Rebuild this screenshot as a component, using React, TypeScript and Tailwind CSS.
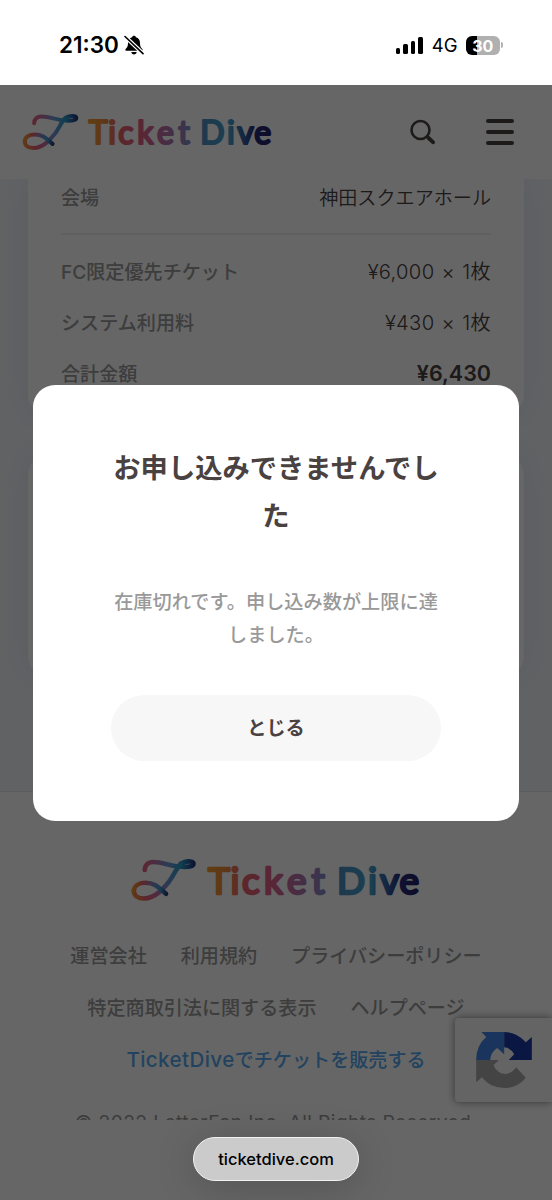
import React from 'react';

interface Row {
  label: string;
  value: string;
  strong?: boolean;
}

const priceRows: Row[] = [
  { label: 'FC限定優先チケット', value: '¥6,000 × 1枚' },
  { label: 'システム利用料', value: '¥430 × 1枚' },
  { label: '合計金額', value: '¥6,430', strong: true },
];

const footerLinks: string[][] = [
  ['運営会社', '利用規約', 'プライバシーポリシー'],
  ['特定商取引法に関する表示', 'ヘルプページ'],
];

const Logo: React.FC<{ id: string; className: string }> = ({ id, className }) => (
  <svg className={className} viewBox="0 0 290 44" fill="none" role="img" aria-label="Ticket Dive">
    <defs>
      <linearGradient id={`${id}-word`} gradientUnits="userSpaceOnUse" x1="76" y1="0" x2="288" y2="0">
        <stop offset="0" stopColor="#f29a2e" />
        <stop offset="0.09" stopColor="#ee8a3c" />
        <stop offset="0.17" stopColor="#e8606a" />
        <stop offset="0.32" stopColor="#dd6090" />
        <stop offset="0.42" stopColor="#b86fa8" />
        <stop offset="0.54" stopColor="#8c86c4" />
        <stop offset="0.63" stopColor="#4a8fc0" />
        <stop offset="0.77" stopColor="#46a0cc" />
        <stop offset="0.84" stopColor="#3468a8" />
        <stop offset="0.91" stopColor="#262c7c" />
        <stop offset="1" stopColor="#241f66" />
      </linearGradient>
      <linearGradient id={`${id}-top`} gradientUnits="userSpaceOnUse" x1="12" y1="0" x2="66" y2="0">
        <stop offset="0" stopColor="#e8607c" />
        <stop offset="0.2" stopColor="#c46ea0" />
        <stop offset="0.45" stopColor="#6f96d4" />
        <stop offset="0.7" stopColor="#2b9cc8" />
        <stop offset="0.85" stopColor="#245a9c" />
        <stop offset="1" stopColor="#1f2468" />
      </linearGradient>
      <linearGradient id={`${id}-stem`} gradientUnits="userSpaceOnUse" x1="2" y1="40" x2="52" y2="4">
        <stop offset="0" stopColor="#f29a2e" />
        <stop offset="0.16" stopColor="#e8606a" />
        <stop offset="0.36" stopColor="#c66aa8" />
        <stop offset="0.58" stopColor="#7290d2" />
        <stop offset="0.85" stopColor="#3a9ccc" />
        <stop offset="1" stopColor="#2580b4" />
      </linearGradient>
      <linearGradient id={`${id}-tail`} gradientUnits="userSpaceOnUse" x1="2" y1="30" x2="37" y2="36">
        <stop offset="0" stopColor="#f29a2e" />
        <stop offset="0.25" stopColor="#e8606a" />
        <stop offset="0.5" stopColor="#9080c0" />
        <stop offset="0.75" stopColor="#3a9ccc" />
        <stop offset="1" stopColor="#222a70" />
      </linearGradient>
    </defs>
    <g strokeWidth="4.6" strokeLinecap="round" strokeLinejoin="round">
      <path stroke={`url(#${id}-stem)`} d="M2.8 33C3 38 7 40.5 13 40.5C24 40.5 32 31 38 23.7C43 17 46 9 50 5.5" />
      <path stroke={`url(#${id}-tail)`} d="M2.8 33C3 27.5 8.5 24.8 14.5 24.8C25 24.8 29 31 35 35.8" />
      <path stroke={`url(#${id}-top)`} d="M13.8 12C13.8 7 17 4 22.5 4C32 4 39 8.2 50 8.7C57 9.2 62.5 8.5 62.5 5.8C62.5 3 57 2.8 53 4.2C49.5 5.6 47.5 8 45.5 11" />
    </g>
    <text
      x="77 99.5 111 133 156 180.5 193 206 237 249 268.5"
      y="36"
      fontSize="37"
      fontWeight="400"
      fill={`url(#${id}-word)`}
      stroke={`url(#${id}-word)`}
      strokeWidth="2.6"
      strokeLinejoin="round"
      className="font-['Lato',sans-serif]"
    >
      Ticket Dive
    </text>
  </svg>
);

const StatusBar: React.FC = () => (
  <div className="flex h-[85px] shrink-0 items-center justify-between bg-white pl-[59px] pr-[49px] pt-[5px] font-['Inter',sans-serif] text-black">
    <div className="flex items-center gap-[5px]">
      <span className="text-[22.5px] font-semibold leading-none">21:30</span>
      <svg className="h-5 w-5" viewBox="0 0 20 20">
        <path fill="currentColor" d="M10 0.8c-.9 0-1.7.6-1.9 1.4C5.2 3 4 5.3 4 8c0 4-1.5 5-2.5 6.3-.4.6-.1 1.4.7 1.4h15.6c.8 0 1.1-.8.7-1.4C17.5 13 16 12 16 8c0-2.7-1.2-5-4.1-5.8C11.7 1.4 10.9.8 10 .8zM7.3 17h5.4c-.2 1.5-1.3 2.5-2.7 2.5S7.5 18.5 7.3 17z" />
        <path stroke="white" strokeWidth="4" d="M0.5 1L19.5 19" />
        <path stroke="currentColor" strokeWidth="1.6" strokeLinecap="round" d="M1 1.5L19 18.7" />
      </svg>
    </div>
    <div className="flex items-center">
      <div className="flex items-end gap-[3px]">
        <span className="h-1.5 w-[4.5px] rounded-[1.5px] bg-black" />
        <span className="h-[9.5px] w-[4.5px] rounded-[1.5px] bg-black" />
        <span className="h-[13px] w-[4.5px] rounded-[1.5px] bg-black" />
        <span className="h-[17px] w-[4.5px] rounded-[1.5px] bg-black" />
      </div>
      <span className="ml-[9px] text-[18.5px] leading-none">4G</span>
      <div className="ml-2 flex h-[19px] w-[34.5px] items-center justify-center rounded-[6px] bg-[linear-gradient(90deg,#000_32%,#b0b0b0_32%)] pt-px text-[16px] font-bold leading-none text-white">
        30
      </div>
      <span className="ml-px h-[6px] w-[2px] rounded-r-full bg-[#b0b0b0]" />
    </div>
  </div>
);

const SiteHeader: React.FC = () => (
  <header className="flex h-[94px] shrink-0 items-center bg-white pl-[22px] pr-[38px] text-[#4a4141]">
    <Logo id="head" className="h-[38px] w-[251px]" />
    <svg className="ml-auto h-[26px] w-[26px]" viewBox="0 0 26 26" fill="none" stroke="currentColor" strokeLinecap="round">
      <circle cx="10.5" cy="11" r="9" strokeWidth="2.6" />
      <path strokeWidth="3.8" d="M18 18.5l5.2 4.8" />
    </svg>
    <div className="ml-[50px] flex w-7 flex-col gap-[6.7px]">
      <span className="h-[4.3px] rounded-full bg-current" />
      <span className="h-[4.3px] rounded-full bg-current" />
      <span className="h-[4.3px] rounded-full bg-current" />
    </div>
  </header>
);

const OrderSummary: React.FC = () => (
  <section className="h-[236px] rounded-b-[20px] bg-white px-[33px] text-[19.1px] shadow-[0_0_30px_rgba(70,100,140,0.1)]">
    <div className="flex h-9 items-center justify-between pt-0.5">
      <span className="font-medium text-[#999]">会場</span>
      <span className="font-[350] text-[#4a4141]">神田スクエアホール</span>
    </div>
    <hr className="mt-[18px] mb-3 border-t-2 border-[#f0f0f0]" />
    {priceRows.map((row) => (
      <div key={row.label} className="flex h-[51px] items-center justify-between">
        <span className="font-medium text-[#999]">{row.label}</span>
        <span className={row.strong ? '-mt-0.5 text-[21.5px] font-semibold text-[#4a4141]' : 'text-[20.2px] font-[350] tracking-[0.3px] [word-spacing:1.2px] text-[#4a4141]'}>
          {row.value}
        </span>
      </div>
    ))}
  </section>
);

const SiteFooter: React.FC = () => (
  <footer className="flex h-[340px] shrink-0 flex-col items-center border-t border-[#e4e4e4] bg-white pt-[66px] text-[19.1px] font-medium text-[#999]">
    <Logo id="foot" className="h-11 w-[290px] shrink-0" />
    <nav className="mt-7 flex shrink-0 flex-col items-center">
      {footerLinks.map((links) => (
        <div key={links[0]} className="flex h-[52px] items-center gap-[34px] whitespace-nowrap">
          {links.map((link) => (
            <a key={link}>{link}</a>
          ))}
        </div>
      ))}
      <a className="flex h-[52px] items-center text-[#55a8ee]">
        <span className="text-[20.6px] tracking-[0.4px]">TicketDive</span>でチケットを販売する
      </a>
    </nav>
    <p className="mt-[22px] whitespace-nowrap text-[19.2px] font-normal leading-7 tracking-[0.4px]">© 2022 LetterFan Inc. All Rights Reserved.</p>
  </footer>
);

const RecaptchaBadge: React.FC = () => (
  <div className="absolute bottom-[18px] right-0 flex h-[84px] w-[97px] items-center rounded-l-[4px] bg-[#f9f9f9] pl-[21px] shadow-[0_0_8px_#808080]">
    <svg className="h-14 w-14" viewBox="108 97 167 168">
      <path fill="#4285e8" d="M192 97H124l14 15Q108 138 108 181H150Q151 158 171 145L192 164z" />
      <path fill="#1c3aa9" d="M192 97Q230 97 257 128L275 112V181H206L222 164Q211 144 192 143z" />
      <path fill="#ababab" d="M108 181H176L160 197Q172 223 197 223Q216 221 228 203L257 234Q231 265 192 265Q150 265 125 233L108 248z" />
    </svg>
  </div>
);

const ErrorDialog: React.FC = () => (
  <div className="absolute inset-0 flex items-center justify-center bg-black/60">
    <div role="dialog" className="flex h-[436px] w-[486px] flex-col items-center rounded-[22px] bg-white px-[78px] pt-[60px]">
      <h2 className="w-[330px] break-all text-center text-[27.3px] font-bold leading-[48px] text-[#4a4141]">お申し込みできませんでした</h2>
      <p className="mt-[45px] w-[330px] text-center text-[19.2px] font-medium leading-[33px] text-[#999]">在庫切れです。申し込み数が上限に達しました。</p>
      <button className="mt-[43px] h-[66px] w-[330px] rounded-full bg-[#f7f7f7] pt-0.5 text-[19.2px] font-bold text-[#4a4141]">とじる</button>
    </div>
  </div>
);

export default function App() {
  return (
    <div className="flex h-[1200px] w-[552px] flex-col overflow-hidden bg-[#666] font-['Inter','Noto_Sans_CJK_JP',sans-serif]" lang="ja">
      <StatusBar />
      <div className="relative flex h-[1035px] shrink-0 flex-col overflow-hidden">
        <SiteHeader />
        <main className="h-[612px] shrink-0 overflow-hidden bg-[#f1f5fb] px-7">
          <OrderSummary />
          <section className="mt-10 h-[221px] rounded-[20px] bg-white shadow-[0_0_30px_rgba(70,100,140,0.1)]" />
        </main>
        <SiteFooter />
        <RecaptchaBadge />
        <ErrorDialog />
      </div>
      <div className="flex h-20 shrink-0 justify-center pt-[17px]">
        <div className="z-10 flex h-11 w-[166px] items-center justify-center rounded-full border border-[#f2f2f2] bg-[#cbcbcb] text-[16.5px] font-medium text-black shadow-[0_6px_40px_rgba(0,0,0,0.18)]">
          ticketdive.com
        </div>
      </div>
    </div>
  );
}
